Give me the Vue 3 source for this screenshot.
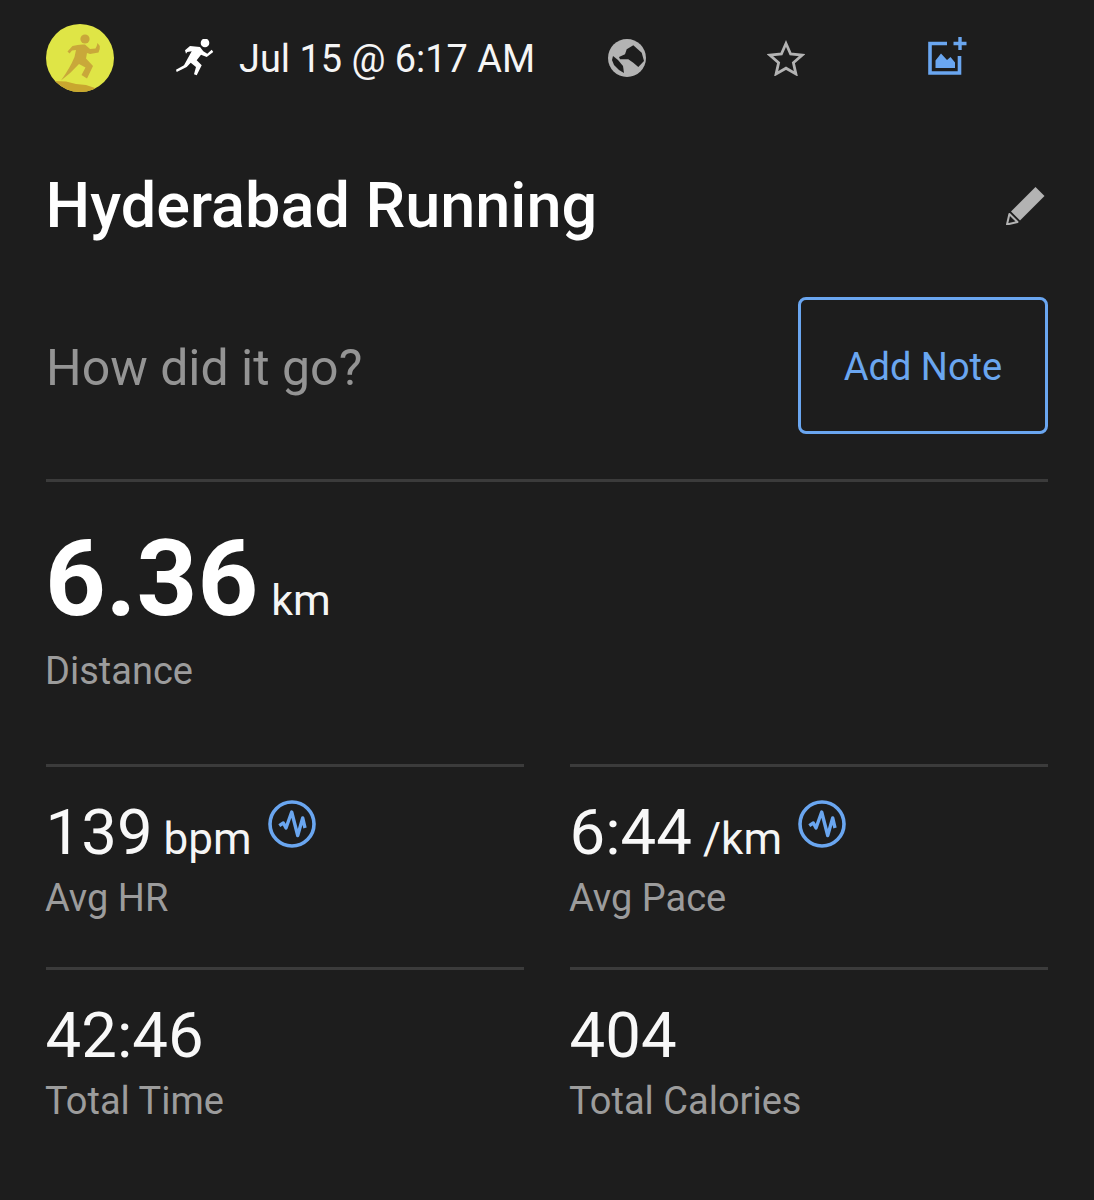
<script setup>
const stats = [
  [
    { value: '139', unit: 'bpm', label: 'Avg HR', badge: true },
    { value: '6:44', unit: '/km', label: 'Avg Pace', badge: true }
  ],
  [
    { value: '42:46', unit: '', label: 'Total Time', badge: false },
    { value: '404', unit: '', label: 'Total Calories', badge: false }
  ]
]
</script>

<template>
  <main class="screen">
    <header class="top">
      <svg class="logo" viewBox="0 0 68 68" aria-hidden="true">
        <defs><clipPath id="lc"><circle cx="34" cy="34" r="34" /></clipPath></defs>
        <circle cx="34" cy="34" r="34" fill="#dfe546" />
        <path clip-path="url(#lc)" d="M8 57 L20 57.5 L30 60 L40 61 L52 65 L52 70 L8 70 Z" fill="#c9a62f" />
        <circle cx="39" cy="15" r="4.6" fill="#c9a83a" />
        <path d="M21.5 27.5 L26.5 22 Q33 20 39 20.5 L44 25 L49.5 24.5 Q51 22 51.5 19 L53.8 22 Q54.3 25 52.5 28.5 L44 30 L41 29 L40 34.5 L47 42 L41 54.5 L35.5 51 L39.5 43.5 L33 40 Q24 50 15 56.5 Q24 44 28.5 33 L30 26 L26 26.5 L23.5 29.5 Z" fill="#c9a83a" />
      </svg>
      <svg class="runner" viewBox="0 0 38 38" aria-hidden="true">
        <circle cx="29" cy="3.9" r="4.3" fill="#fff" />
        <path d="M9 11.3 L14 7 L24 8 L27.3 12.3 L31.3 14.7 L35.7 10.7 L37.3 13 L30.7 18 L25 15.7 L20.7 21.3 L25.7 26.3 L20.7 36.3 L18 35.3 L20 28 L14.7 23.7 L10.7 28 L0.7 33 L0 30.7 L8 26.3 L15.7 12.3 L11.3 13 L10 14.7 Z" fill="#fff" />
      </svg>
      <span class="date">Jul 15 @ 6:17 AM</span>
      <svg class="globe" viewBox="0 0 38 38" aria-hidden="true">
        <circle cx="19" cy="19" r="19" fill="#b3b3b3" />
        <path d="M11 18 L17 15.3 L18.7 10.3 L25.3 6.3 L33.7 13.7 L36 22 L30.3 28 L25.3 23.7 L20.3 20.3 L12 20.3 Z" fill="#1d1d1d" />
        <path d="M5 17 L10 21 L15 27 L16 34 L11 31 L6 26 L4 21 Z" fill="#1d1d1d" />
      </svg>
      <svg class="star" viewBox="0 0 38 36" aria-hidden="true">
        <path d="M19 3.5 L23.6 14 L35 15.2 L26.4 22.8 L28.9 33.9 L19 28.2 L9.1 33.9 L11.6 22.8 L3 15.2 L14.4 14 Z" fill="none" stroke="#b3b3b3" stroke-width="2.8" />
      </svg>
      <svg class="addimg" viewBox="0 0 40 40" aria-hidden="true">
        <path d="M20 7.5 H3 V37 H32.5 V20" fill="none" stroke="#6aa6f0" stroke-width="3.6" />
        <path d="M33 1 V14 M26.5 7.5 H39.5" fill="none" stroke="#6aa6f0" stroke-width="3.4" />
        <path d="M8.5 32 V24.5 L14 17.5 L20 24 L23.5 21 L28 26.5 V32 Z" fill="#6aa6f0" />
      </svg>
    </header>

    <section class="title-row">
      <h1>Hyderabad Running</h1>
      <svg class="pencil" viewBox="0 0 40 40" aria-hidden="true">
        <path d="M29.5 2 L38.5 11 L14 35.5 L5 26.5 Z" fill="#b3b3b3" />
        <path d="M3.4 29 L11.5 37 L1 39.5 Z" fill="none" stroke="#b3b3b3" stroke-width="2" stroke-linejoin="round" />
      </svg>
    </section>

    <section class="note-row">
      <p class="prompt">How did it go?</p>
      <button class="note-btn" type="button"><span>Add Note</span></button>
    </section>

    <section class="distance">
      <div class="dist-value"><strong>6.36</strong><span>km</span></div>
      <div class="dist-label">Distance</div>
    </section>

    <section class="grid">
      <template v-for="(row, r) in stats" :key="r">
        <article v-for="s in row" :key="s.label" class="stat">
          <div class="stat-value">
            <span class="num">{{ s.value }}</span>
            <span v-if="s.unit" class="unit">{{ s.unit }}</span>
            <svg v-if="s.badge" class="badge" viewBox="0 0 48 48" aria-hidden="true">
              <circle cx="24" cy="24" r="22" fill="none" stroke="#6aa6f0" stroke-width="3.6" />
              <path d="M11.3 25.7 L15.3 23 L18 28 L23.7 12 L29.7 35.5 L34.7 18 L37 28" fill="none" stroke="#6aa6f0" stroke-width="3.4" stroke-linejoin="round" />
            </svg>
          </div>
          <div class="stat-label">{{ s.label }}</div>
        </article>
      </template>
    </section>
  </main>
</template>

<style scoped>
.screen {
  box-sizing: border-box;
  width: 1094px;
  height: 1200px;
  padding: 0 46px;
  background: #1d1d1d;
  color: #fff;
  font-family: Roboto, "Liberation Sans", sans-serif;
  overflow: hidden;
}
.top {
  display: flex;
  align-items: center;
  height: 68px;
  padding-top: 24px;
}
.logo { width: 68px; height: 68px; flex: none; }
.runner { width: 38px; height: 38px; flex: none; margin-left: 62px; }
.date { font-size: 37.9px; margin-left: 25px; width: 295px; white-space: nowrap; color: #f5f5f5; position: relative; top: 1px; }
.globe { width: 38px; height: 38px; flex: none; margin-left: 74px; }
.star { width: 38px; height: 36px; flex: none; margin-left: 121px; }
.addimg { width: 40px; height: 40px; flex: none; margin-left: 122px; margin-top: -4px; }
.title-row {
  display: flex;
  justify-content: space-between;
  align-items: center;
  margin-top: 76px;
  height: 76px;
}
h1 { margin: 0 0 0 -0.5px; font-size: 63px; font-weight: 500; line-height: 76px; color: #fff; }
.pencil { width: 40px; height: 40px; margin-right: 2px; position: relative; top: -1px; }
.note-row {
  display: flex;
  justify-content: space-between;
  align-items: center;
  margin-top: 53px;
  padding-bottom: 45px;
  border-bottom: 3px solid #3b3b3b;
}
.prompt { margin: 4px 0 0 0; font-size: 50px; color: #949494; }
.note-btn {
  box-sizing: border-box;
  width: 250px;
  height: 137px;
  background: transparent;
  border: 3px solid #6aa6f0;
  border-radius: 8px;
  color: #6aa6f0;
  font-family: inherit;
  font-size: 38px;
  padding: 2px 0 0;
}
.distance { margin-top: 43px; height: 239px; }
.dist-value { display: flex; align-items: baseline; height: 108px; }
.dist-value strong { font-size: 106px; font-weight: 700; line-height: 108px; margin-left: -1px; }
.dist-value span { font-size: 43px; margin-left: 13px; color: #f5f5f5; }
.dist-label { font-size: 38px; color: #9c9c9c; margin-top: 16px; margin-left: -1px; }
.grid {
  display: grid;
  grid-template-columns: 478px 478px;
  column-gap: 46px;
}
.stat {
  box-sizing: border-box;
  height: 203px;
  border-top: 3px solid #3b3b3b;
  padding-top: 31px;
}
.stat-value { display: flex; align-items: baseline; height: 70px; position: relative; }
.num { font-size: 63.5px; line-height: 70px; color: #f8f8f8; margin-left: -0.5px; }
.unit { font-size: 44px; margin-left: 11px; color: #f5f5f5; }
.badge { width: 48px; height: 48px; align-self: flex-start; margin-left: 16px; margin-top: 2px; }
.stat-label { font-size: 38px; color: #9c9c9c; margin-top: 8px; margin-left: -1px; }
</style>
